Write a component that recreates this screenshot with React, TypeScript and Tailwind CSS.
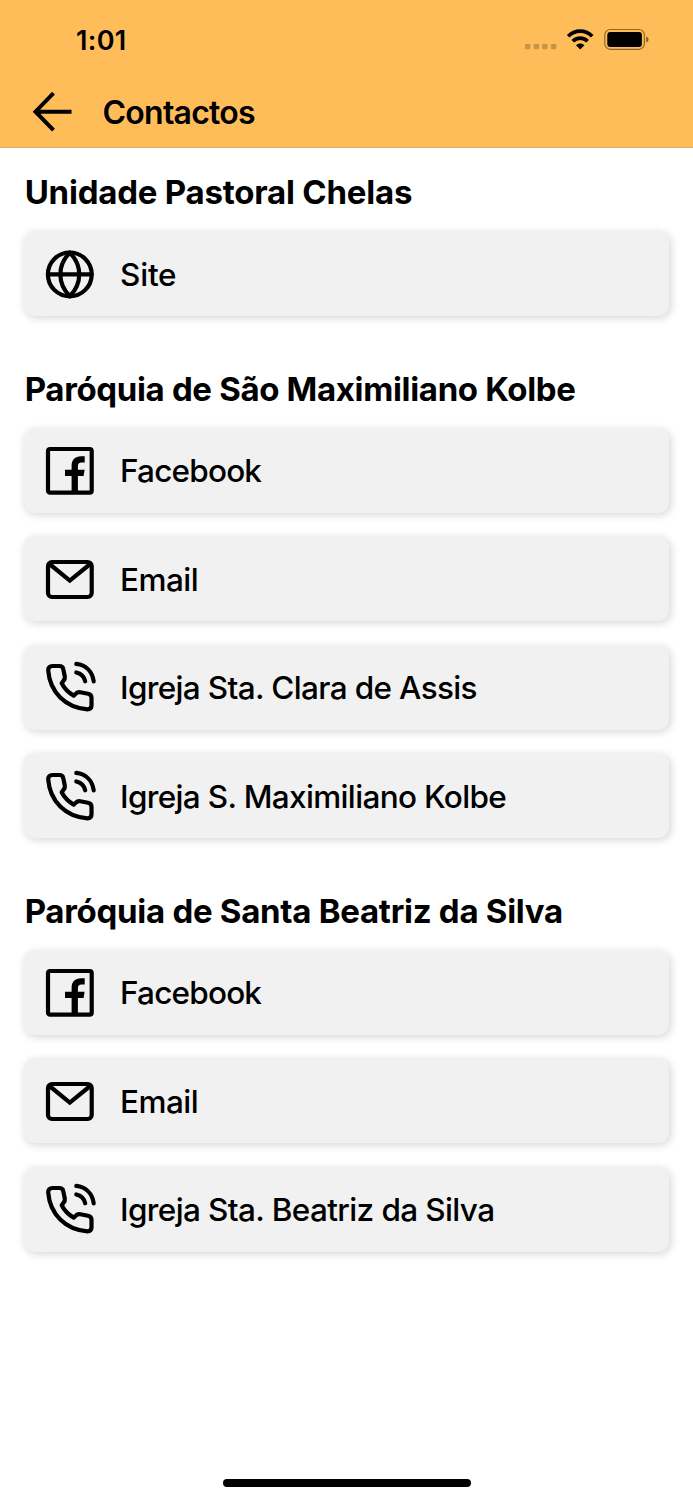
import type { ReactNode } from "react";

function Icon({ children }: { children: ReactNode }) {
  return (
    <svg
      className="h-[56px] w-[56px] shrink-0"
      viewBox="0 0 56 56"
      fill="none"
      stroke="black"
      strokeWidth="4.2"
      strokeLinecap="round"
      strokeLinejoin="round"
    >
      {children}
    </svg>
  );
}

function GlobeIcon() {
  return (
    <Icon>
      <circle cx="27.8" cy="28.4" r="21.9" />
      <path d="M6 28.4H49.6M27.8 6.6C15.2 19.6 15.2 37.2 27.8 50.2C40.4 37.2 40.4 19.6 27.8 6.6Z" />
    </Icon>
  );
}

function FacebookIcon() {
  return (
    <Icon>
      <rect x="6" y="7" width="43.7" height="43.7" rx="2" />
      <path
        d="M29.6 50.6V34H23V27.8H29.6V24C29.6 17.8 33 14.3 39 14.3H42.7V20.4H39.6C36.8 20.4 35.9 21.6 35.9 24.3V27.8H42.6L41.6 34H35.9V50.6Z"
        fill="black"
        stroke="none"
      />
    </Icon>
  );
}

function MailIcon() {
  return (
    <Icon>
      <rect x="6" y="11" width="43.7" height="35" rx="4" />
      <path d="M7.5 13L27.8 29.6L48.2 13" strokeLinejoin="miter" />
    </Icon>
  );
}

function PhoneIcon() {
  return (
    <Icon>
      <path d="M10.5 7H17.3C19.5 7 20.9 8.1 21.2 9.9L22.8 17.5C23.1 19.3 22.7 20.6 21.5 21.8L19.7 24.2C22.3 29.3 26.4 33.5 31.7 36.6L34 34.5C35.2 33.3 36.6 33 38.3 33.3L46 34.8C48.3 35.3 49.5 36.6 49.5 38.7V46.3C49.5 48.9 47.8 50.3 45.4 50.3C23.5 48.8 8 33.3 6.2 11.5C6.1 8.7 7.6 7 10.5 7Z" />
      <path d="M34.3 4.9C43.9 6.1 50.4 12.6 51.7 22.3M34.3 13.5C39 14.5 42.2 17.8 43.2 22.3" />
    </Icon>
  );
}

const icons = {
  site: GlobeIcon,
  facebook: FacebookIcon,
  email: MailIcon,
  phone: PhoneIcon,
};

type Entry = { icon: keyof typeof icons; label: string; tracking: string };
type Section = { title: string; tracking: string; entries: Entry[] };

const sections: Section[] = [
  {
    title: "Unidade Pastoral Chelas",
    tracking: "tracking-[-0.22px]",
    entries: [{ icon: "site", label: "Site", tracking: "tracking-[-0.2px]" }],
  },
  {
    title: "Paróquia de São Maximiliano Kolbe",
    tracking: "tracking-[-0.34px]",
    entries: [
      { icon: "facebook", label: "Facebook", tracking: "tracking-[-0.8px]" },
      { icon: "email", label: "Email", tracking: "tracking-[-0.5px]" },
      { icon: "phone", label: "Igreja Sta. Clara de Assis", tracking: "tracking-[-0.65px]" },
      { icon: "phone", label: "Igreja S. Maximiliano Kolbe", tracking: "tracking-[-0.66px]" },
    ],
  },
  {
    title: "Paróquia de Santa Beatriz da Silva",
    tracking: "tracking-[-0.28px]",
    entries: [
      { icon: "facebook", label: "Facebook", tracking: "tracking-[-0.8px]" },
      { icon: "email", label: "Email", tracking: "tracking-[-0.5px]" },
      { icon: "phone", label: "Igreja Sta. Beatriz da Silva", tracking: "tracking-[-0.62px]" },
    ],
  },
];

function StatusBar() {
  return (
    <div className="flex h-[76px] items-start justify-between pt-[24px] pr-[44px] pl-[76px]">
      <span className="pt-px text-[27px] leading-[32px] font-semibold tracking-[0.3px]">1:01</span>
      <svg className="mt-[2px] h-[28px] w-[124px]" viewBox="525 26 124 28">
        <g fill="black" fillOpacity="0.22">
          <rect x="525" y="44" width="5.4" height="5.2" rx="1.3" />
          <rect x="533.7" y="44" width="5.4" height="5.2" rx="1.3" />
          <rect x="542.2" y="44" width="5.4" height="5.2" rx="1.3" />
          <rect x="550.9" y="44" width="5.4" height="5.2" rx="1.3" />
        </g>
        <g fill="none" stroke="black" strokeWidth="3.7">
          <path d="M568.2 36.2C574.8 29.3 585.6 29.3 592.2 36.2" />
          <path d="M572.8 41.2C576.9 37 583.5 37 587.6 41.2" />
        </g>
        <path d="M576 45.3C578.4 43 582 43 584.4 45.3L580.2 49.5Z" fill="black" />
        <rect x="604.8" y="29.5" width="39.6" height="19.8" rx="5.5" fill="none" stroke="black" strokeOpacity="0.45" strokeWidth="1.2" />
        <rect x="607.3" y="31.9" width="34.6" height="15" rx="3" fill="black" />
        <path d="M646.2 36.4C649.3 37.6 649.3 41.2 646.2 42.4Z" fill="black" fillOpacity="0.5" />
      </svg>
    </div>
  );
}

export default function App() {
  return (
    <div className="flex h-[1500px] w-[693px] flex-col bg-white font-['Inter','Liberation_Sans',sans-serif] text-black">
      <header className="h-[148px] shrink-0 border-b border-[#e0b06a] bg-[#ffbd5a]">
        <StatusBar />
        <div className="flex h-[71px] items-center pl-[32px]">
          <svg className="h-[40px] w-[40px]" viewBox="0 0 40 40" fill="none" stroke="black" strokeWidth="4">
            <path d="M21.5 1.2L3.5 19.7L21.5 38.2M3.5 19.7H39.5" />
          </svg>
          <h1 className="ml-[30.5px] pt-[2px] text-[32px] leading-[40px] font-semibold tracking-[-0.75px]">Contactos</h1>
        </div>
      </header>

      <main className="flex grow flex-col gap-[51.5px] px-[24px] pt-[23.2px]">
        {sections.map((section) => (
          <section key={section.title}>
            <h2 className={`mb-[18px] h-[42px] pt-[0.9px] pl-[0.7px] text-[33px] leading-[40px] font-bold whitespace-nowrap ${section.tracking}`}>
              {section.title}
            </h2>
            <div className="flex flex-col gap-[23.5px]">
              {section.entries.map((entry) => {
                const EntryIcon = icons[entry.icon];
                return (
                  <div
                    key={entry.label}
                    className="flex h-[85px] items-center rounded-[11px] bg-[#f1f1f1] pl-[18px] shadow-[1.5px_2px_8px_rgba(0,0,0,0.16)]"
                  >
                    <EntryIcon />
                    <span className={`ml-[22px] pt-[2.2px] text-[31.5px] leading-[40px] font-[450] whitespace-nowrap ${entry.tracking}`}>
                      {entry.label}
                    </span>
                  </div>
                );
              })}
            </div>
          </section>
        ))}
      </main>

      <footer className="flex h-[22px] shrink-0 justify-center">
        <div className="mt-[0.5px] h-[8.5px] w-[248px] rounded-full bg-black" />
      </footer>
    </div>
  );
}
